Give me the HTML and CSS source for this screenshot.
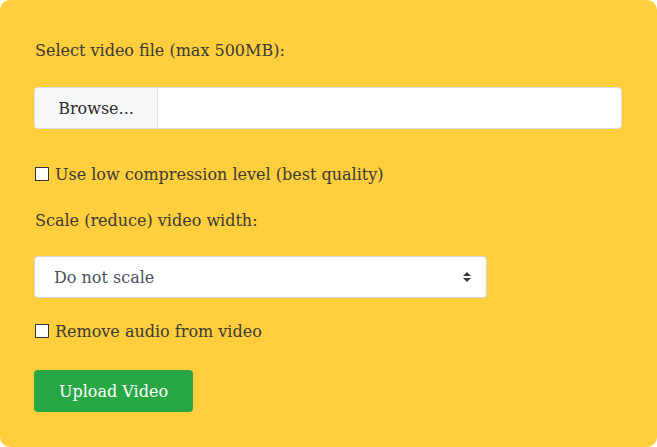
FILE: index.html
```html
<!DOCTYPE html>
<html>
<head>
<meta charset="utf-8">
<link rel="stylesheet" href="styles.css">
</head>
<body>
<form class="card">
  <label class="label first">Select video file (max 500MB):</label>
  <div class="file">
    <span class="browse">Browse...</span>
    <span class="file-name"></span>
  </div>
  <label class="check one"><span class="box"></span><span>Use low compression level (best quality)</span></label>
  <label class="label second">Scale (reduce) video width:</label>
  <div class="select">
    <span class="select-text">Do not scale</span>
    <svg class="arrows" width="8" height="10" viewBox="0 0 4 5"><path d="M2 0L0 2h4zm0 5L0 3h4z" fill="#343a40"/></svg>
  </div>
  <label class="check two"><span class="box"></span><span>Remove audio from video</span></label>
  <div class="actions"><span class="btn">Upload Video</span></div>
</form>
</body>
</html>
```

FILE: styles.css
```css
html, body {
  margin: 0;
  padding: 0;
  background: #ffffff;
}
.card {
  box-sizing: border-box;
  width: 657px;
  height: 447px;
  background: #ffce3d;
  border-radius: 10px;
  padding: 38px 35px 0 34px;
  display: flex;
  flex-direction: column;
  align-items: flex-start;
  font-family: "DejaVu Serif", serif;
  font-size: 16px;
  color: #3a3a36;
}
.label {
  display: block;
  height: 26px;
  line-height: 26px;
  padding-left: 1px;
}
.label.first { margin-bottom: 23px; }
.file {
  box-sizing: border-box;
  align-self: stretch;
  height: 42px;
  display: flex;
  background: #ffffff;
  border: 1px solid #dcdfe3;
  border-radius: 4px;
  overflow: hidden;
}
.browse {
  width: 122px;
  background: #f7f8fa;
  border-right: 1px solid #dcdfe3;
  display: flex;
  align-items: center;
  justify-content: center;
  color: #2b2b2b;
}
.file-name { flex: 1; }
.check {
  display: flex;
  align-items: center;
  height: 26px;
  padding-left: 1px;
  gap: 6px;
}
.check.one { margin-top: 32px; }
.label.second { margin-top: 21px; }
.box {
  box-sizing: border-box;
  width: 14px;
  height: 14px;
  background: #ffffff;
  border: 1px solid #333333;
}
.select {
  box-sizing: border-box;
  margin-top: 22px;
  width: 453px;
  height: 42px;
  background: #ffffff;
  border: 1px solid #d4d6da;
  border-radius: 4px;
  display: flex;
  align-items: center;
  justify-content: space-between;
  padding: 0 15px 0 19px;
  color: #4a5060;
}
.check.two { margin-top: 20px; }
.actions { margin-top: 26px; }
.btn {
  box-sizing: border-box;
  display: flex;
  align-items: center;
  justify-content: center;
  width: 159px;
  height: 42px;
  background: #28a745;
  color: #ffffff;
  border-radius: 4px;
}
```
